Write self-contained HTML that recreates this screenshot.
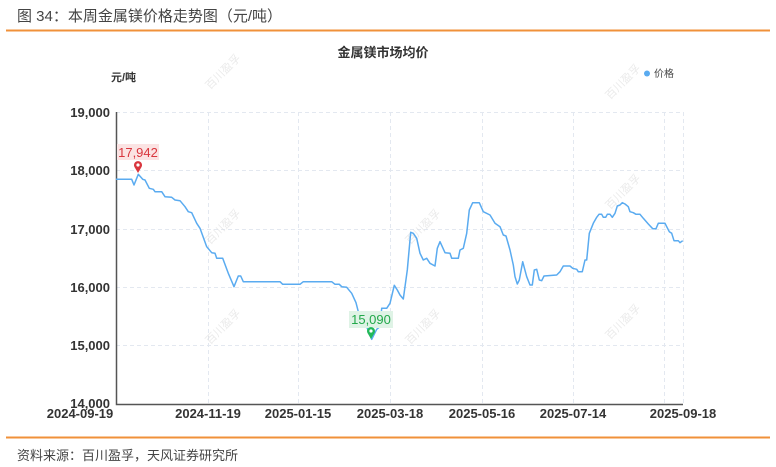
<!DOCTYPE html>
<html><head><meta charset="utf-8"><style>
body{margin:0;width:776px;height:467px;background:#fff;overflow:hidden;font-family:"Liberation Sans","Noto Sans CJK SC",sans-serif}
</style></head><body>
<svg width="776" height="467" xmlns="http://www.w3.org/2000/svg" style="position:absolute;left:0;top:0">
<text x="17" y="21" font-size="15" fill="#444" font-family="Liberation Sans, Noto Sans CJK SC, sans-serif">图 34：本周金属镁价格走势图（元/吨）</text>
<line x1="6" y1="30.5" x2="770" y2="30.5" stroke="#f0913a" stroke-width="2"/>
<text x="383" y="57" font-size="13" font-weight="bold" fill="#333" text-anchor="middle" font-family="Liberation Sans, Noto Sans CJK SC, sans-serif">金属镁市场均价</text>
<text x="111" y="81" font-size="11" font-weight="bold" fill="#333" font-family="Liberation Sans, Noto Sans CJK SC, sans-serif">元/吨</text>
<circle cx="647" cy="73.5" r="3" fill="#5aabf0"/>
<text x="654" y="77" font-size="10" fill="#444" font-family="Liberation Sans, Noto Sans CJK SC, sans-serif">价格</text>
<g stroke="#e3e8f0" stroke-dasharray="4,3" stroke-width="1">
<line x1="116" y1="112.5" x2="683" y2="112.5"/><line x1="116" y1="170.5" x2="683" y2="170.5"/><line x1="116" y1="229.5" x2="683" y2="229.5"/><line x1="116" y1="287.5" x2="683" y2="287.5"/><line x1="116" y1="345.5" x2="683" y2="345.5"/>
<line x1="208.5" y1="112" x2="208.5" y2="404"/><line x1="298.5" y1="112" x2="298.5" y2="404"/><line x1="390.5" y1="112" x2="390.5" y2="404"/><line x1="482.5" y1="112" x2="482.5" y2="404"/><line x1="573.5" y1="112" x2="573.5" y2="404"/><line x1="664.5" y1="112" x2="664.5" y2="404"/><line x1="683.5" y1="112" x2="683.5" y2="404"/>
</g>
<g font-size="13" font-weight="bold" fill="#333" text-anchor="end" font-family="Liberation Sans, sans-serif">
<text x="110" y="117">19,000</text><text x="110" y="175">18,000</text><text x="110" y="234">17,000</text><text x="110" y="292">16,000</text><text x="110" y="350">15,000</text><text x="110" y="408">14,000</text>
</g>
<path d="M116.5 112V404.5H683" fill="none" stroke="#555" stroke-width="1.5"/>
<g font-size="13" font-weight="bold" fill="#333" text-anchor="middle" font-family="Liberation Sans, sans-serif">
<text x="80" y="418">2024-09-19</text><text x="208" y="418">2024-11-19</text><text x="298" y="418">2025-01-15</text><text x="390" y="418">2025-03-18</text><text x="482" y="418">2025-05-16</text><text x="573" y="418">2025-07-14</text><text x="683" y="418">2025-09-18</text>
</g>
<g fill="#ddd" font-size="11" font-family="Liberation Sans, Noto Sans CJK SC, sans-serif" opacity="0.6">
<text transform="translate(210,90) rotate(-45)">百川盈孚</text>
<text transform="translate(210,245) rotate(-45)">百川盈孚</text>
<text transform="translate(410,245) rotate(-45)">百川盈孚</text>
<text transform="translate(210,345) rotate(-45)">百川盈孚</text>
<text transform="translate(410,345) rotate(-45)">百川盈孚</text>
<text transform="translate(610,210) rotate(-45)">百川盈孚</text>
<text transform="translate(610,340) rotate(-45)">百川盈孚</text>
<text transform="translate(610,100) rotate(-45)">百川盈孚</text>
</g>
<polyline fill="none" stroke="#5aabf0" stroke-width="1.5" stroke-linejoin="round" points="116,179.3 131.7,179.3 134,185 138.3,174.3 142.7,179.3 145,180 149.3,188.3 153.3,189.3 155,191.7 161.7,191.7 165,196.7 171.7,197.3 175,200 180,200.7 185,206.7 188.3,211.7 191.7,212.7 196.7,223.3 200,228.3 206.7,246.7 211.7,252.7 215,253.3 216.7,258.3 222.7,258.3 228.3,273.3 234,286.7 238.3,276 240.7,276 243.3,281.7 280,281.7 282.7,284.3 300,284.3 303.3,281.7 331.7,281.7 335,284.3 339.3,284.3 341.7,286.7 346.7,287.3 351.7,293.3 356,302.7 358.3,311.7 366.7,326.7 371.7,339.3 376.7,329.3 380,326.7 381.7,308.3 386.7,308.3 390,303.3 394.3,285.3 397.3,290 400,295 403.3,299 405,286.7 407.3,270 410.7,232.3 413.3,233.3 416.7,238.3 420,253.3 423.3,260 426.7,258.3 430,263.3 435,266 437.3,248.3 440,241.7 445,252.7 450,253.3 451.7,258.3 458.3,258.3 460,250 463.3,248.3 466.7,233.3 469.3,210 472.7,202.7 479.3,202.7 483.3,211.7 490,215 495,223.3 500,226.7 503.3,235 506,236 510,250 513.3,265 515,276.7 517.3,284 519.3,280 522.7,261.7 526.7,276.7 530,285 532.3,285 534.3,270 536.7,269.3 539.3,280 541.7,280.7 544,276 556.7,275 560,271.7 563.3,266 570,266 572.7,268.3 576.7,269.3 578.3,271.7 582.3,271.7 585,260 586.7,260 589.3,233.3 593.3,223.3 596.7,217.3 599,214.3 601.7,214.3 603.3,217.3 605.7,217.3 607.3,214.3 610,214.3 612.3,217.3 615,213.3 617.3,206 620,205 622.3,202.7 625,204 628.3,206.7 630,211.7 633.3,212.7 636,214.3 640,214.3 643.3,218.3 648.3,224 652.7,228.7 656,228.7 658.3,223.3 665,223.3 666.7,226.7 669.3,231.7 671.7,233.3 674,240.7 678.3,240.7 680,242.7 682.7,240.7"/>
<rect x="117" y="144" width="42" height="16" fill="#fbe3e3"/>
<text x="138" y="157" font-size="13" fill="#d9363e" text-anchor="middle" font-family="Liberation Sans, sans-serif">17,942</text>
<path d="M138 173 L134.5 167 A4 4 0 1 1 141.5 167 Z" fill="#d9363e"/><circle cx="138" cy="165" r="1.6" fill="#fff"/>
<rect x="349" y="311" width="44" height="17" fill="#dff3e6"/>
<text x="371" y="324" font-size="13" fill="#22a84a" text-anchor="middle" font-family="Liberation Sans, sans-serif">15,090</text>
<path d="M371 339 L367.5 333 A4 4 0 1 1 374.5 333 Z" fill="#22b85a"/><circle cx="371" cy="331" r="1.6" fill="#fff"/>
<line x1="6" y1="437.5" x2="770" y2="437.5" stroke="#f0913a" stroke-width="2"/>
<text x="17" y="460" font-size="13" fill="#444" font-family="Liberation Sans, Noto Sans CJK SC, sans-serif">资料来源：百川盈孚，天风证券研究所</text>
</svg>
</body></html>
